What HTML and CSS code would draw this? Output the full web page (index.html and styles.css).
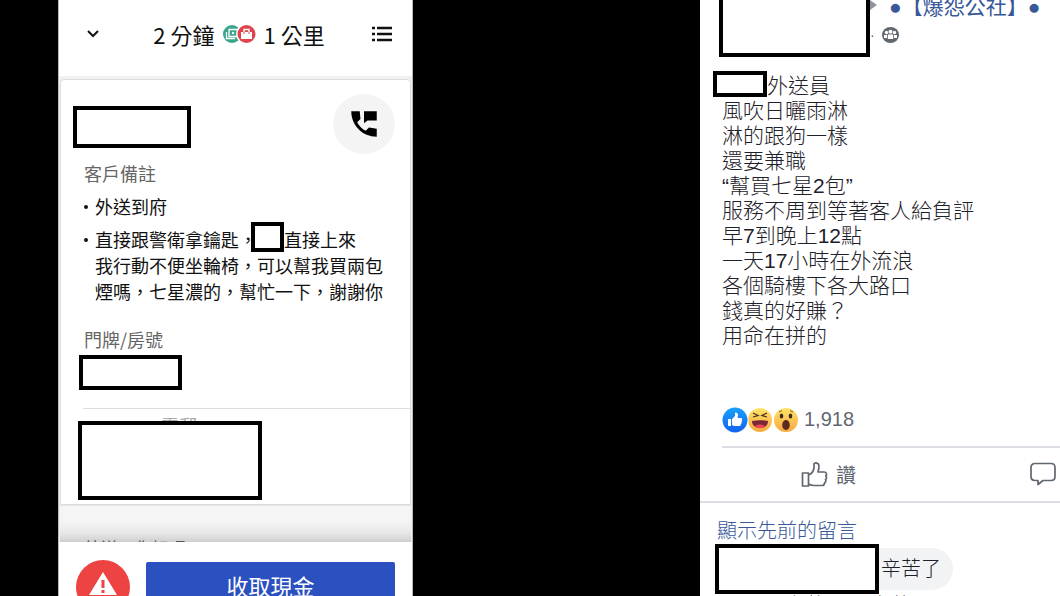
FILE: index.html
```
<!DOCTYPE html>
<html lang="zh-Hant">

<head>
  <meta charset="UTF-8">
  <meta name="viewport" content="width=device-width, initial-scale=1.0">
  <title>爆怨公社</title>
  <link rel="stylesheet" href="styles.css">
</head>

<body>
  <!-- 外送 App -->
  <section class="phone">
    <header class="phone-header">
      <button class="icon-button" type="button" aria-label="收合">
        <svg width="14" height="10" viewBox="0 0 14 10"><path d="M2 2l5 5 5-5" fill="none" stroke="#111" stroke-width="2"/></svg>
      </button>
      <h1 class="trip">
        <span>2 分鐘</span>
        <svg width="33" height="18" viewBox="0 0 33 18">
          <circle cx="9" cy="9" r="9" fill="#3aa58c"/>
          <path d="M6 4.500h10v7H6zM3.500 7v6.500H12" fill="none" stroke="#fff" stroke-width="1.300"/>
          <circle cx="10" cy="8" r="1.200" fill="#fff"/>
          <circle cx="23.500" cy="9" r="10.500" fill="#fff"/>
          <circle cx="23.500" cy="9" r="9" fill="#e0434b"/>
          <path d="M18 7h11v7H18z" fill="#fff"/>
          <path d="M21 7V4.500h5V7" fill="none" stroke="#fff" stroke-width="1.400"/>
          <path d="M21 7v2M26 7v2" stroke="#e0434b"/>
        </svg>
        <span>1 公里</span>
      </h1>
      <button class="icon-button" type="button" aria-label="清單">
        <svg width="20" height="16" viewBox="0 0 20 16"><path d="M0 2h3M0 8h3M0 14h3M5 2h15M5 8h15M5 14h15" stroke="#111" stroke-width="2.500"/></svg>
      </button>
    </header>

    <main class="order">
      <div class="order-customer">
        <div class="mask mask-name"></div>
        <button class="call" type="button" aria-label="聯絡客戶">
          <svg width="34" height="34" viewBox="0 0 24 24"><path d="M3 3h6l.5 5.500-2.300 2.300c1.500 2.800 3.300 4.600 6 6l2.300-2.300 5.500.8V21C11 21 3 13 3 3zM12 3v8.500l2.500-2H21V3z"/></svg>
        </button>
      </div>
      <h2 class="order-label">客戶備註</h2>
      <ul class="notes">
        <li>外送到府</li>
        <li>直接跟警衛拿鑰匙，<span class="mask mask-word"></span>直接上來<br>我行動不便坐輪椅，可以幫我買兩包<br>煙嗎，七星濃的，幫忙一下，謝謝你</li>
      </ul>
      <h2 class="order-label">門牌/房號</h2>
      <div class="mask mask-room"></div>
      <div class="address">
        <p class="address-text">電郵</p>
        <div class="mask mask-address"></div>
      </div>
    </main>

    <p class="next">外送，您好嗎</p>

    <footer class="phone-footer">
      <button class="alert" type="button" aria-label="回報問題">
        <svg width="54" height="54" viewBox="0 0 54 54">
          <circle cx="27" cy="27" r="27" fill="#ed4343"/>
          <path d="M27 12l14 23H13z" fill="#fff"/>
          <path d="M27 20v8M27 30v3" stroke="#ed4343" stroke-width="3"/>
        </svg>
      </button>
      <button class="collect" type="button">收取現金</button>
    </footer>
  </section>

  <!-- 社團貼文 -->
  <article class="post">
    <header class="post-header">
      <div class="mask mask-author"></div>
      <div class="post-group">
        <div class="post-group-name">
          <svg width="7" height="12" viewBox="0 0 7 12"><path d="M0 1l7 5-7 5z" fill="#90949c"/></svg>
          <a href="#">●【爆怨公社】●</a>
        </div>
        <div class="post-meta">
          <span>·</span>
          <svg width="17" height="16" viewBox="0 0 17 16">
            <ellipse cx="8.500" cy="8" rx="8.500" ry="8" fill="#606770"/>
            <g fill="#fff">
              <circle cx="4.500" cy="5.500" r="1.700"/><circle cx="12.500" cy="5.500" r="1.700"/><circle cx="8.500" cy="4.800" r="2"/>
              <path d="M2 11V8h3v3zM12 11V8h3v3zM5.800 12V7.500h5.400V12z"/>
            </g>
          </svg>
        </div>
      </div>
    </header>

    <p class="post-text"><span class="mask mask-brand"></span>外送員<br>風吹日曬雨淋<br>淋的跟狗一樣<br>還要兼職<br>“幫買七星2包”<br>服務不周到等著客人給負評<br>早7到晚上12點<br>一天17小時在外流浪<br>各個騎樓下各大路口<br>錢真的好賺？<br>用命在拼的</p>

    <div class="reactions">
      <svg width="77" height="26" viewBox="0 0 77 26">
        <defs>
          <linearGradient id="blue" x2="0" y2="1"><stop stop-color="#18a0fb"/><stop offset="1" stop-color="#1163f0"/></linearGradient>
          <linearGradient id="yellow" x2="0" y2="1"><stop stop-color="#ffe46a"/><stop offset="1" stop-color="#f5a83c"/></linearGradient>
        </defs>
        <circle cx="64" cy="13" r="12" fill="url(#yellow)"/>
        <circle cx="38" cy="13" r="13" fill="#fff"/>
        <circle cx="38" cy="13" r="12" fill="url(#yellow)"/>
        <circle cx="13" cy="13" r="13.500" fill="#fff"/>
        <circle cx="13" cy="13" r="12.500" fill="url(#blue)"/>
        <path d="M6 12h3v7H6zM10 12l3-3V6c1-1 3 0 3 2l-.5 3H19c1.500 0 1.500 2 .5 2.300 1 .5.6 2-.3 2.200.6.7.2 1.700-.6 1.900.3 1-.4 1.600-1.300 1.600H12l-2-1z" fill="#fff"/>
        <path d="M30 14c5-1 11-1 16 0 0 4-3 7-8 7s-8-3-8-7z" fill="#7a2634"/>
        <path d="M33 19c3-2 7-2 10 0-3 3-7 3-10 0z" fill="#f0445a"/>
        <path d="M31 6l5 2.500-5 1.500M45 6l-5 2.500 5 1.500" fill="none" stroke="#4a3420" stroke-width="1.300"/>
        <ellipse cx="59.500" cy="9" rx="1.800" ry="2.500" fill="#3b2a20"/>
        <ellipse cx="68.500" cy="9" rx="1.800" ry="2.500" fill="#3b2a20"/>
        <path d="M57 5l3-1.500M71 5l-3-1.500" stroke="#8a5a20"/>
        <ellipse cx="64" cy="18" rx="3.800" ry="5" fill="#5d2a20"/>
      </svg>
      <span>1,918</span>
    </div>

    <div class="actions">
      <button class="action" type="button">
        <svg width="27" height="27" viewBox="0 0 27 27"><path d="M1.500 12h6v13h-6zM7.500 14c3-1 5-4 5.500-7V3c1-2 5-1 5 2 0 2-.5 4-1 6h6c3 0 3 3 1.800 4 1.200 1 .8 3-.3 3.500.8 1.500 0 3-1 3.500 0 2-1 2.500-2.500 2.500h-8c-2 0-3.500-.5-5.500-1.500" fill="none" stroke="#606770" stroke-width="1.700" stroke-linejoin="round"/></svg>
        <span>讚</span>
      </button>
      <button class="action" type="button" aria-label="留言">
        <svg width="26" height="25" viewBox="0 0 26 25"><path d="M5 1.500h16c2.500 0 4 1.500 4 4v9c0 2.500-1.500 4-4 4h-8L8 22.500v-4H5c-2.500 0-4-1.500-4-4v-9c0-2.500 1.500-4 4-4z" fill="none" stroke="#606770" stroke-width="1.700" stroke-linejoin="round"/></svg>
      </button>
    </div>

    <section class="comments">
      <a class="comments-more" href="#">顯示先前的留言</a>
      <div class="comment">
        <div class="mask mask-commenter"></div>
        <p class="comment-text">辛苦了</p>
      </div>
      <p class="comment-next">辛苦，嗎 辛苦</p>
    </section>
  </article>
</body>

</html>
```
FILE: styles.css
```
* {
  box-sizing: border-box;
}

body,
h1,
h2,
p,
ul {
  margin: 0;
  padding: 0;
}

body {
  display: grid;
  grid-template-columns: 355fr 287fr 360fr;
  height: 100vh;
  padding-left: 58px;
  overflow: hidden;
  background: #000;
  font-family: "Liberation Sans", "Noto Sans CJK TC", sans-serif;
}

a {
  text-decoration: none;
  color: #385898;
}

button {
  padding: 0;
  border: 0;
  background: none;
  font-family: inherit;
}

svg {
  display: block;
  flex: none;
}

/* 遮住個資的白色方塊 */
.mask {
  flex: none;
  border: 4px solid #000;
  background: #fff;
}

/* 外送 App */
.phone {
  min-width: 0;
  border: 1px solid #bbb;
  border-width: 0 1px;
  background: #f1f1f1;
  font-family: "Noto Sans CJK TC", sans-serif;
  color: #111;
}

.phone-header {
  display: grid;
  grid-template-columns: 20px 1fr 20px;
  align-items: center;
  height: 76px;
  padding: 0 20px 8px 27px;
  background: #fff;
}

.trip {
  display: flex;
  align-items: center;
  justify-content: center;
  gap: 8px;
  font-size: 22px;
  font-weight: 400;
  line-height: 28px;
}

.order {
  margin: 3px 1px 0;
  padding-bottom: 4px;
  border: 1px solid #ddd;
  border-radius: 4px 4px 0 0;
  background: #fff;
}

.order-customer {
  display: flex;
  align-items: flex-end;
  justify-content: space-between;
  padding: 14px 15px 0 12px;
}

.mask-name {
  width: 118px;
  height: 42px;
  margin-bottom: 6px;
}

.call {
  display: flex;
  align-items: center;
  justify-content: center;
  width: 62px;
  height: 60px;
  border-radius: 50%;
  background: #f4f4f4;
}

.order-label {
  margin: 6px 0 7px 23px;
  font-size: 18px;
  font-weight: 400;
  line-height: 26px;
  color: #666;
}

.notes {
  list-style: none;
  font-size: 18px;
  line-height: 26px;
}

.notes li {
  display: flow-root;
  margin-bottom: 7px;
  padding-left: 34px;
  white-space: nowrap;
}

.notes li::before {
  content: "";
  float: left;
  width: 4px;
  height: 4px;
  margin: 12px 0 0 -11px;
  border-radius: 50%;
  background: #111;
}

.notes + .order-label {
  margin: 22px 0 3px 23px;
}

.mask-word {
  display: inline-block;
  width: 33px;
  height: 30px;
  margin: -4px 0 0 -6px;
  vertical-align: bottom;
}

.mask-room {
  width: 103px;
  height: 35px;
  margin-left: 18px;
}

.address {
  margin: 18px 0 0 22px;
  padding-top: 6px;
  border-top: 1px solid #ddd;
}

.address-text {
  height: 6px;
  padding-left: 78px;
  overflow: hidden;
  font-size: 18px;
  line-height: 20px;
  color: #aaa;
}

.mask-address {
  width: 184px;
  height: 79px;
  margin-left: -5px;
}

.next {
  height: 37px;
  margin: 0 1px;
  padding: 32px 0 0 24px;
  overflow: hidden;
  border-top: 1px solid #e4e4e4;
  background: linear-gradient(#f5f5f5 40%, #e8e8e8 75%, #cfcfcf);
  font-size: 17px;
  line-height: 20px;
  color: #555;
}

.phone-footer {
  display: flex;
  align-items: center;
  gap: 16px;
  padding: 18px 17px;
  background: #fff;
}

.collect {
  flex: 1;
  height: 50px;
  padding-bottom: 4px;
  border-radius: 2px;
  background: #2b50c0;
  font-size: 22px;
  color: #fff;
}

/* 社團貼文 */
.post {
  grid-column: 3;
  min-width: 0;
  overflow: hidden;
  background: #fff;
  font-size: 21px;
  color: #1d2129;
}

.post-header {
  display: flex;
  height: 57px;
  padding-left: 19px;
}

.mask-author {
  width: 151px;
  border-top: 0;
}

.post-group-name {
  display: flex;
  align-items: center;
  gap: 12px;
  height: 20px;
  margin-top: -5px;
  white-space: nowrap;
}

.post-meta {
  display: flex;
  align-items: center;
  gap: 7px;
  height: 20px;
  margin-top: 10px;
  font-size: 14px;
  color: #606770;
}

.post-text {
  padding: 16px 0 0 22px;
  font-weight: 300;
  line-height: 25px;
  white-space: nowrap;
}

.mask-brand {
  display: inline-block;
  width: 54px;
  height: 26px;
  margin: -2px 0 0 -9px;
  vertical-align: top;
}

.reactions {
  display: flex;
  align-items: center;
  gap: 5px;
  height: 55px;
  margin: 45px 0 0 22px;
  border-bottom: 2px solid #dadde1;
  font-size: 20px;
  color: #606770;
}

.actions {
  display: flex;
  justify-content: space-between;
  height: 55px;
  padding: 0 4px 0 101px;
  border-bottom: 2px solid #dadde1;
}

.action {
  display: flex;
  align-items: center;
  gap: 8px;
  font-size: 20px;
  color: #606770;
}

.comments {
  padding: 15px 0 0 15px;
  font-size: 20px;
  font-weight: 300;
}

.comments-more {
  display: block;
  padding-left: 2px;
  line-height: 26px;
}

.comment {
  display: flex;
  align-items: center;
}

.mask-commenter {
  z-index: 1;
  width: 164px;
  height: 50px;
}

.comment-text {
  margin-left: -30px;
  padding: 0 12px 0 32px;
  border-radius: 21px;
  background: #f2f3f5;
  line-height: 42px;
}

.comment-next {
  padding-left: 70px;
  line-height: 24px;
}
```
